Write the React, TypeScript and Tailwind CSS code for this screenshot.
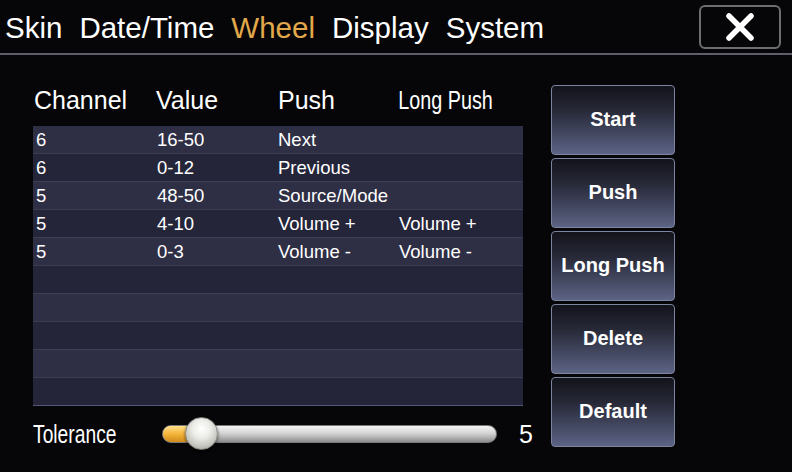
import * as React from "react";

const tabs = ["Skin", "Date/Time", "Wheel", "Display", "System"];

const rows: [string, string, string, string][] = [
    ["6", "16-50", "Next", ""],
    ["6", "0-12", "Previous", ""],
    ["5", "48-50", "Source/Mode", ""],
    ["5", "4-10", "Volume +", "Volume +"],
    ["5", "0-3", "Volume -", "Volume -"],
    ["", "", "", ""],
    ["", "", "", ""],
    ["", "", "", ""],
    ["", "", "", ""],
    ["", "", "", ""],
];

const buttons = ["Start", "Push", "Long Push", "Delete", "Default"];

export default function App() {
    return (
        <div className="w-[792px] h-[472px] overflow-hidden bg-[#060608] text-white font-['Liberation_Sans',Arial,sans-serif]">
            {/* Tabs */}
            <div className="h-[53px] flex items-center justify-between">
                <div className="flex items-center gap-[17px] pl-[5px] text-[29.5px] leading-none pt-[2px]">
                    {tabs.map((t) => (
                        <span key={t} className={t === "Wheel" ? "text-[#e2a94a]" : "text-white"}>
                            {t}
                        </span>
                    ))}
                </div>
                <button className="mr-[11px] w-[82px] h-[44px] rounded-[6px] border-2 border-[#6e6e72] flex items-center justify-center">
                    <svg width="30" height="30" viewBox="0 0 30 30">
                        <path d="M4 4 L26 26 M26 4 L4 26" stroke="#ffffff" strokeWidth="5.5" strokeLinecap="round" />
                    </svg>
                </button>
            </div>
            <div className="h-[2px] bg-[#5e5e6c]" />

            {/* Body */}
            <div className="flex pl-[33px] pt-[30px]">
                <div className="w-[490px] flex flex-col">
                    <div className="h-[30px] mb-[11px] grid grid-cols-[121px_121px_121px_127px] items-center text-[25px] leading-none">
                        <span className="pl-[1px]">Channel</span>
                        <span className="pl-[2px]">Value</span>
                        <span className="pl-[3px]">Push</span>
                        <span className="pl-[3px] inline-block origin-left scale-x-[0.79] whitespace-nowrap">Long Push</span>
                    </div>
                    <div className="flex flex-col">
                        {rows.map((r, i) => (
                            <div
                                key={i}
                                className={`h-[28px] pt-[2px] grid grid-cols-[121px_121px_121px_127px] items-center text-[18.5px] leading-none border-b ${
                                    i === rows.length - 1 ? "border-[#565678]" : "border-[#3d3d56]"
                                } ${i % 2 === 0 ? "bg-[#2e2e45]" : "bg-[#25253a]"}`}
                            >
                                <span className="pl-[3px]">{r[0]}</span>
                                <span className="pl-[3px]">{r[1]}</span>
                                <span className="pl-[3px] whitespace-nowrap">{r[2]}</span>
                                <span className="pl-[3px] whitespace-nowrap">{r[3]}</span>
                            </div>
                        ))}
                    </div>
                    {/* Tolerance slider */}
                    <div className="h-[56px] flex items-center">
                        <span className="w-[129px] shrink-0 text-[25px] leading-none inline-block origin-left scale-x-[0.77] whitespace-nowrap">
                            Tolerance
                        </span>
                        <div className="relative shrink-0 w-[335px] h-[18px] rounded-full border border-[#7a7a7a] bg-[linear-gradient(to_bottom,#f4f4f4_0%,#d4d4d4_45%,#a8a8a8_80%,#8a8a8a_100%)]">
                            <div className="absolute left-0 top-0 h-full w-[30px] rounded-l-full bg-[linear-gradient(to_bottom,#ffe08a_0%,#f4b43a_50%,#d08a1c_100%)]" />
                            <div className="absolute left-[22px] top-[-9px] w-[33px] h-[33px] rounded-full border border-[#8a8a84] bg-[radial-gradient(circle_at_50%_35%,#ffffff_0%,#ecece8_35%,#c4c4be_70%,#84847e_100%)] shadow-[0_1px_3px_rgba(0,0,0,0.6)]" />
                        </div>
                        <span className="ml-[22px] shrink-0 text-[25px] leading-none">5</span>
                    </div>
                </div>

                {/* Action buttons */}
                <div className="ml-[28px] flex flex-col gap-[3px]">
                    {buttons.map((b) => (
                        <button
                            key={b}
                            className="w-[124px] h-[70px] pb-[3px] rounded-[4px] border border-[#7c84a0] bg-[linear-gradient(to_bottom,#13131b_0%,#262836_35%,#474c66_75%,#5c6384_100%)] text-[20px] font-bold text-white flex items-center justify-center"
                        >
                            {b}
                        </button>
                    ))}
                </div>
            </div>
        </div>
    );
}
